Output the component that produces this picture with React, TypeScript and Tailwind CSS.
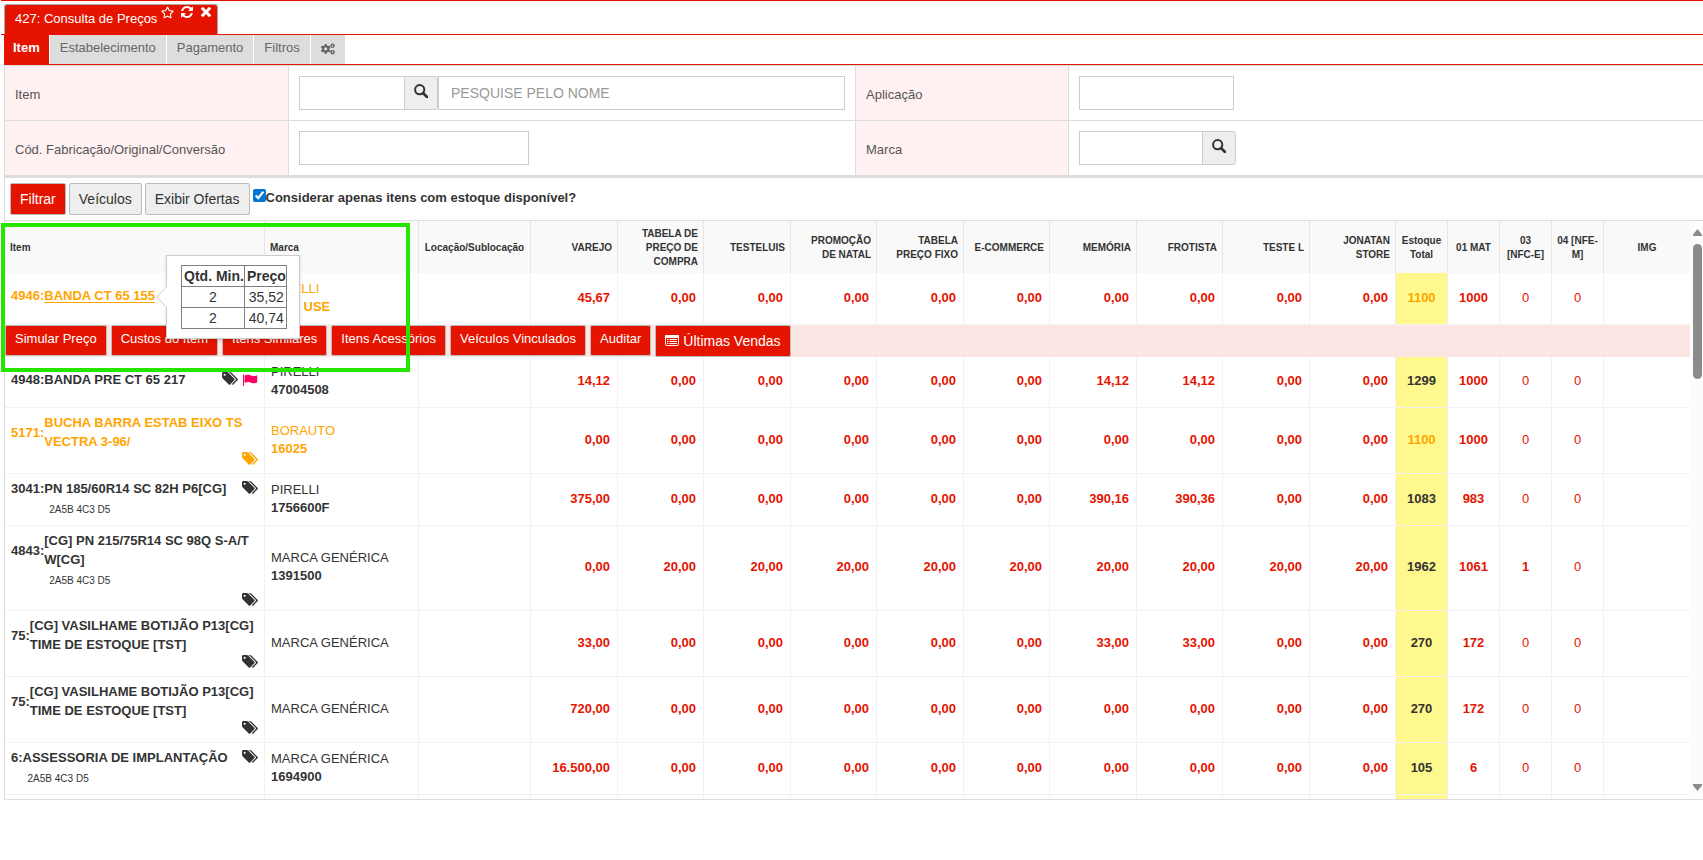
import type { ReactNode } from 'react';
import { FaCogs, FaRegStar } from 'react-icons/fa';

type Row = {
  code: string;
  name: string[];
  sub?: string;
  brand: string;
  ref?: string;
  prices: string[];
  total: string;
  stock: string[];
  height: string;
  orange?: boolean;
  tags?: 'side' | 'below';
  flag?: boolean;
  selected?: boolean;
};

const zeros = (n: number) => Array(n).fill('0,00');

const rows: Row[] = [
  { code: '4946:', name: ['BANDA CT 65 155'], brand: 'PIRELLI', ref: 'NÃO USE', prices: ['45,67', ...zeros(9)], total: '1100', stock: ['1000', '0', '0'], height: 'h-[52px]', orange: true, selected: true },
  { code: '4948:', name: ['BANDA PRE CT 65 217'], brand: 'PIRELLI', ref: '47004508', prices: ['14,12', ...zeros(5), '14,12', '14,12', ...zeros(2)], total: '1299', stock: ['1000', '0', '0'], height: 'h-[51px]', tags: 'side', flag: true },
  { code: '5171:', name: ['BUCHA BARRA ESTAB EIXO TS', 'VECTRA 3-96/'], brand: 'BORAUTO', ref: '16025', prices: zeros(10), total: '1100', stock: ['1000', '0', '0'], height: 'h-[66px]', orange: true, tags: 'below' },
  { code: '3041:', name: ['PN 185/60R14 SC 82H P6[CG]'], sub: '2A5B 4C3 D5', brand: 'PIRELLI', ref: '1756600F', prices: ['375,00', ...zeros(5), '390,16', '390,36', ...zeros(2)], total: '1083', stock: ['983', '0', '0'], height: 'h-[52px]', tags: 'side' },
  { code: '4843:', name: ['[CG] PN 215/75R14 SC 98Q S-A/T', 'W[CG]'], sub: '2A5B 4C3 D5', brand: 'MARCA GENÉRICA', ref: '1391500', prices: ['0,00', ...Array(9).fill('20,00')], total: '1962', stock: ['1061', '1', '0'], height: 'h-[85px]', tags: 'below' },
  { code: '75:', name: ['[CG] VASILHAME BOTIJÃO P13[CG]', 'TIME DE ESTOQUE [TST]'], brand: 'MARCA GENÉRICA', prices: ['33,00', ...zeros(5), '33,00', '33,00', ...zeros(2)], total: '270', stock: ['172', '0', '0'], height: 'h-[66px]', tags: 'below' },
  { code: '75:', name: ['[CG] VASILHAME BOTIJÃO P13[CG]', 'TIME DE ESTOQUE [TST]'], brand: 'MARCA GENÉRICA', prices: ['720,00', ...zeros(9)], total: '270', stock: ['172', '0', '0'], height: 'h-[66px]', tags: 'below' },
  { code: '6:', name: ['ASSESSORIA DE IMPLANTAÇÃO'], sub: '2A5B 4C3 D5', brand: 'MARCA GENÉRICA', ref: '1694900', prices: ['16.500,00', ...zeros(9)], total: '105', stock: ['6', '0', '0'], height: 'h-[52px]', tags: 'side' },
];

const priceHeads = ['VAREJO', 'TABELA DE PREÇO DE COMPRA', 'TESTELUIS', 'PROMOÇÃO DE NATAL', 'TABELA PREÇO FIXO', 'E-COMMERCE', 'MEMÓRIA', 'FROTISTA', 'TESTE L', 'JONATAN STORE'];
const stockHeads = [['Estoque', 'Total'], ['01 MAT'], ['03', '[NFC-E]'], ['04 [NFE-', 'M]']];
const tabs = ['Estabelecimento', 'Pagamento', 'Filtros'];
const actions = ['Simular Preço', 'Custos do Item', 'Itens Similares', 'Itens Acessórios', 'Veículos Vinculados', 'Auditar'];

function TagsIcon() {
  return (
    <svg viewBox="0 0 1920 1792" className="h-[15px] w-4 shrink-0" fill="currentColor" aria-hidden="true">
      <path d="M448 448q0-53-37.5-90.5t-90.5-37.5-90.5 37.5-37.5 90.5 37.5 90.5 90.5 37.5 90.5-37.5 37.5-90.5zm1067 576q0 53-37 90l-491 492q-39 37-91 37-53 0-90-37l-715-716q-38-37-64.5-101t-26.5-117v-416q0-52 38-90t90-38h416q53 0 117 26.5t102 64.5l715 714q37 39 37 91zm384 0q0 53-37 90l-491 492q-39 37-91 37-36 0-59-14t-53-45l470-470q37-37 37-90 0-52-37-91l-715-714q-38-38-102-64.5t-117-26.5h224q53 0 117 26.5t102 64.5l715 714q37 39 37 91z" />
    </svg>
  );
}

function FlagIcon() {
  return (
    <svg viewBox="0 0 16 16" className="h-4 w-4 shrink-0 text-[#ff0066]" fill="currentColor" aria-hidden="true">
      <path d="M1 3.500h1V15H1zM2.600 4.600C5 3.600 7 3.600 9 4.600s4 .8 6.200-.4v7.400c-2.200 1-4.200 1-6.200.1s-4-.9-6.400.2z" />
    </svg>
  );
}

function RefreshIcon() {
  return (
    <svg viewBox="0 0 1792 1792" className="h-[14px] w-[14px]" fill="currentColor" aria-hidden="true">
      <path d="M1639 1056q0 5-1 7-64 268-268 434.500t-478 166.500q-146 0-282.500-55t-243.500-157l-129 129q-19 19-45 19t-45-19-19-45v-448q0-26 19-45t45-19h448q26 0 45 19t19 45-19 45l-137 137q71 66 161 102t187 36q134 0 250-65t186-179q11-17 53-117 8-23 30-23h192q13 0 22.500 9.500t9.500 22.500zm25-800v448q0 26-19 45t-45 19h-448q-26 0-45-19t-19-45 19-45l138-138q-148-137-349-137-134 0-250 65t-186 179q-11 17-53 117-8 23-30 23h-199q-13 0-22.500-9.500t-9.500-22.500v-7q65-268 270-434.500t480-166.500q146 0 284 55.500t245 156.500l130-129q19-19 45-19t45 19 19 45z" />
    </svg>
  );
}

function CloseIcon() {
  return (
    <svg viewBox="0 0 12 12" className="h-3 w-3" stroke="currentColor" strokeWidth="3" aria-hidden="true">
      <path d="M1.800 1.800l8.400 8.400M10.200 1.800l-8.400 8.400" />
    </svg>
  );
}

function ListIcon() {
  return (
    <svg viewBox="0 0 14 12" className="h-3 w-[14px]" fill="none" stroke="currentColor" aria-hidden="true">
      <rect x=".5" y=".5" width="13" height="10" rx="1" />
      <path d="M0 1.500h14" strokeWidth="3" />
      <path d="M2 4.500h1.500M2 6.500h1.500M2 8.500h1.500M4.500 4.500H12M4.500 6.500H12M4.500 8.500H12" />
    </svg>
  );
}

function SearchButton({ label }: { label: string }) {
  return (
    <button aria-label={label} className="-ml-px flex h-[34px] w-[34px] shrink-0 items-center justify-center rounded-r-[3px] border border-[#ccc] bg-[#eee] pb-1">
      <svg viewBox="0 0 14 14" className="h-[14px] w-[14px]" fill="none" stroke="#333" aria-hidden="true">
        <circle cx="5.700" cy="5.700" r="4.600" strokeWidth="2" />
        <path d="M9 9l4 4" strokeWidth="2.600" strokeLinecap="round" />
      </svg>
    </button>
  );
}

function FieldLabel({ htmlFor, children }: { htmlFor: string; children: ReactNode }) {
  return (
    <label htmlFor={htmlFor} className="flex items-center border-r border-[#ddd] bg-[#fff1f1] px-[10px] pt-1 text-[13px] text-[#555]">
      {children}
    </label>
  );
}

const inputClass = 'h-[34px] border border-[#ccc] bg-white px-3 text-sm placeholder:text-[#999]';

function FilterForm() {
  return (
    <div className="border-l border-t border-[#ddd]">
      <div className="grid h-[55px] grid-cols-[284px_567px_213px_1fr] border-b border-[#ddd]">
        <FieldLabel htmlFor="item">Item</FieldLabel>
        <div className="flex items-center border-r border-[#ddd] px-[10px]">
          <input id="item" className={`${inputClass} w-[106px]`} />
          <SearchButton label="Pesquisar item" />
          <input aria-label="Nome do item" placeholder="PESQUISE PELO NOME" className={`${inputClass} min-w-0 grow`} />
        </div>
        <FieldLabel htmlFor="aplicacao">Aplicação</FieldLabel>
        <div className="flex items-center px-[10px]">
          <input id="aplicacao" className={`${inputClass} w-[155px]`} />
        </div>
      </div>
      <div className="grid h-[57px] grid-cols-[284px_567px_213px_1fr] border-b-3 border-[#ddd]">
        <FieldLabel htmlFor="fabricacao">Cód. Fabricação/Original/Conversão</FieldLabel>
        <div className="flex items-center border-r border-[#ddd] px-[10px]">
          <input id="fabricacao" className={`${inputClass} w-[230px]`} />
        </div>
        <FieldLabel htmlFor="marca">Marca</FieldLabel>
        <div className="flex items-center px-[10px]">
          <input id="marca" className={`${inputClass} w-[124px]`} />
          <SearchButton label="Pesquisar marca" />
        </div>
      </div>
    </div>
  );
}

function PricePopover() {
  return (
    <div className="absolute top-1/2 left-full z-10 ml-[11px] -mt-[41px] w-[134px] border border-[#ccc] bg-white px-[14px] py-[9px] text-left font-normal text-[#333] shadow-[0_2px_3px_rgba(0,0,0,0.15)]">
      <svg viewBox="0 0 11 22" className="absolute -left-[11px] top-[30px] h-[22px] w-[11px]" aria-hidden="true">
        <path d="M11 0L1 11l10 11z" fill="#fff" />
        <path d="M11 0L1 11l10 11" fill="none" stroke="#ccc" />
      </svg>
      <table className="w-[105px] border-collapse text-sm leading-5 whitespace-nowrap">
        <thead>
          <tr>
            <th className="border border-[#808080] pl-[2px] text-[#333]">Qtd. Min.</th>
            <th className="border border-[#808080] pl-[2px] text-[#333]">Preço</th>
          </tr>
        </thead>
        <tbody>
          <tr>
            <td className="border border-[#808080] text-center">2</td>
            <td className="border border-[#808080] px-[2px] text-right">35,52</td>
          </tr>
          <tr>
            <td className="border border-[#808080] text-center">2</td>
            <td className="border border-[#808080] px-[2px] text-right">40,74</td>
          </tr>
        </tbody>
      </table>
    </div>
  );
}

const cell = 'border-r border-b border-[#f2f2f2]';
const head = 'border-r border-[#e5e5e5] bg-[#f9f9f9] px-[5px] pt-[2px]';

function ItemRow({ row }: { row: Row }) {
  const simple = row.name.length === 1 && !row.sub;
  return (
    <tr className={`${row.height} ${row.orange ? 'text-[#ffa500]' : 'text-[#333]'}`}>
      <td className={`${cell} pr-[6px] pl-[6px] ${simple ? 'pb-[6px] align-middle' : 'pt-[5px] align-top'}`}>
        <div className="flex items-start justify-between">
          <div className="grid grid-cols-[auto_auto] items-center leading-[19px] font-bold whitespace-nowrap">
            <span>{row.code}</span>
            <span className="relative">
              <a href="#item" className={row.selected ? 'underline underline-offset-2' : ''}>
                {row.name.map((line) => <span key={line} className={row.name.length > 1 ? 'block' : ''}>{line}</span>)}
              </a>
              {row.selected && <PricePopover />}
            </span>
            {row.sub && <span className="col-start-2 pt-px pl-[5px] text-[10px] leading-[22px] font-normal">{row.sub}</span>}
          </div>
          {row.tags === 'side' && (
            <div className="flex shrink-0 items-center gap-1 pt-px">
              <TagsIcon />
              {row.flag && <FlagIcon />}
            </div>
          )}
        </div>
        {row.tags === 'below' && <div className="flex h-[14px] items-center justify-end"><TagsIcon /></div>}
      </td>
      <td className={`${cell} pb-[2px] pl-[6px] leading-[18px]`}>
        <div>{row.brand}</div>
        {row.ref && <div className="font-bold">{row.ref}</div>}
      </td>
      <td className={cell}></td>
      {row.prices.map((price, i) => (
        <td key={i} className={`${cell} pr-[7px] pb-[2px] text-right font-bold text-[#e51400]`}>{price}</td>
      ))}
      <td className={`${cell} bg-[#fff88c] pb-[2px] text-center font-bold`}>{row.total}</td>
      {row.stock.map((qty, i) => (
        <td key={i} className={`${cell} pb-[2px] text-center text-[#e51400] ${qty === '0' ? '' : 'font-bold'}`}>{qty}</td>
      ))}
      <td className="border-b border-[#f2f2f2]"></td>
    </tr>
  );
}

function ActionsRow() {
  return (
    <tr>
      <td colSpan={18} className="h-8 bg-[#fce6e3] align-top">
        <div className="flex items-start gap-1 whitespace-nowrap text-white">
          {actions.map((label) => (
            <button key={label} className="h-[31px] rounded-[2px] border border-[#bbb] bg-[#e51400] px-[9px] pb-[3px] text-[13px]">{label}</button>
          ))}
          <button className="flex h-8 items-center gap-1 rounded-[2px] border border-[#bbb] bg-[#e51400] px-[9px] text-sm">
            <ListIcon />
            Últimas Vendas
          </button>
        </div>
      </td>
    </tr>
  );
}

function PriceTable() {
  return (
    <table className="min-w-0 grow table-fixed border-separate border-spacing-0 text-[13px]">
      <colgroup>
        <col className="w-[260px]" />
        <col className="w-[154px]" />
        <col className="w-[112px]" />
        {priceHeads.map((h, i) => <col key={h} className={i % 2 ? 'w-[86px]' : 'w-[87px]'} />)}
        {stockHeads.map(([h]) => <col key={h} className="w-[52px]" />)}
        <col className="w-[86px]" />
      </colgroup>
      <thead className="text-[10px] leading-[14px] text-[#333]">
        <tr className="h-[52px]">
          <th className={`${head} text-left`}>Item</th>
          <th className={`${head} text-left`}>Marca</th>
          <th className={head}>Locação/Sublocação</th>
          {priceHeads.map((h) => <th key={h} className={`${head} text-right`}>{h}</th>)}
          {stockHeads.map((lines) => (
            <th key={lines[0]} className="border-r border-[#e5e5e5] bg-[#f9f9f9] pt-[2px] whitespace-nowrap">
              {lines.map((line) => <div key={line}>{line}</div>)}
            </th>
          ))}
          <th className="bg-[#f9f9f9] pt-[2px]">IMG</th>
        </tr>
      </thead>
      <tbody>
        <ItemRow row={rows[0]} />
        <ActionsRow />
        {rows.slice(1).map((row, i) => <ItemRow key={i} row={row} />)}
        <tr className="h-1">
          {Array.from({ length: 18 }, (_, i) => (
            <td key={i} className={`${i < 17 ? 'border-r border-[#f2f2f2]' : ''} ${i === 13 ? 'bg-[#fff88c]' : ''}`}></td>
          ))}
        </tr>
      </tbody>
    </table>
  );
}

function Scrollbar() {
  return (
    <div className="flex w-[13px] shrink-0 flex-col items-center bg-[#fcfcfc] pt-2 pb-2 pl-[2px]" aria-hidden="true">
      <svg viewBox="0 0 9 7" className="h-[7px] w-[9px]" fill="#8b8b8b"><path d="M4.500 0L9 5.500V7H0V5.500z" /></svg>
      <div className="mt-2 h-[135px] w-[9px] rounded-full bg-[#8b8b8b]" />
      <svg viewBox="0 0 9 7" className="mt-auto h-[7px] w-[9px]" fill="#8b8b8b"><path d="M4.500 7L9 1.500V0H0v1.500z" /></svg>
    </div>
  );
}

export default function App() {
  return (
    <div className="bg-white pl-1 font-['Liberation_Sans',Arial,sans-serif] text-[13px] text-[#333]">
      <header className="-ml-[3px] border-t border-b border-[#e51400] pt-[3px] pl-[3px]">
        <div className="flex h-[30px] w-[214px] items-start rounded-t-[3px] border border-b-0 border-[#aaa] bg-[#e51400] pl-[10px] text-white">
          <span className="pt-1 leading-[19px] whitespace-nowrap">427: Consulta de Preços</span>
          <div className="ml-1 flex items-center gap-[6px]">
            <button aria-label="Favoritar"><FaRegStar size={13} /></button>
            <button aria-label="Atualizar"><RefreshIcon /></button>
            <button aria-label="Fechar"><CloseIcon /></button>
          </div>
        </div>
      </header>

      <nav className="flex h-[30px] gap-px border-b border-[#e51400]">
        <button className="bg-[#e51400] px-[9px] pb-[3px] font-bold text-white">Item</button>
        {tabs.map((tab) => (
          <button key={tab} className="bg-[#ddd] px-[10px] pb-[3px] text-[#666]">{tab}</button>
        ))}
        <button aria-label="Configurações" className="bg-[#ddd] px-[10px] pb-[2px] text-[#666]"><FaCogs size={14} /></button>
      </nav>

      <FilterForm />

      <div className="flex h-[42px] items-start gap-[3px] border-l border-[#ddd] pt-[5px] pl-[5px] text-sm">
        <button className="h-8 rounded-[2px] border border-[#bbb] bg-[#e51400] px-[9px] text-white">Filtrar</button>
        <button className="h-8 rounded-[2px] border border-[#bbb] bg-[#eee] px-[9px]">Veículos</button>
        <button className="h-8 rounded-[2px] border border-[#bbb] bg-[#eee] px-[9px]">Exibir Ofertas</button>
        <label className="flex items-start text-[13px] leading-[29px] font-bold">
          <input type="checkbox" defaultChecked className="mt-[6px] h-[13px] w-[13px] accent-[#0075d8]" />
          Considerar apenas itens com estoque disponível?
        </label>
      </div>

      <main className="relative flex border-t border-b border-l border-[#ddd]">
        <PriceTable />
        <Scrollbar />
        <div className="pointer-events-none absolute -left-1 top-[2px] z-20 h-[149px] w-[409px] border-4 border-[#26e600]" />
      </main>
    </div>
  );
}
